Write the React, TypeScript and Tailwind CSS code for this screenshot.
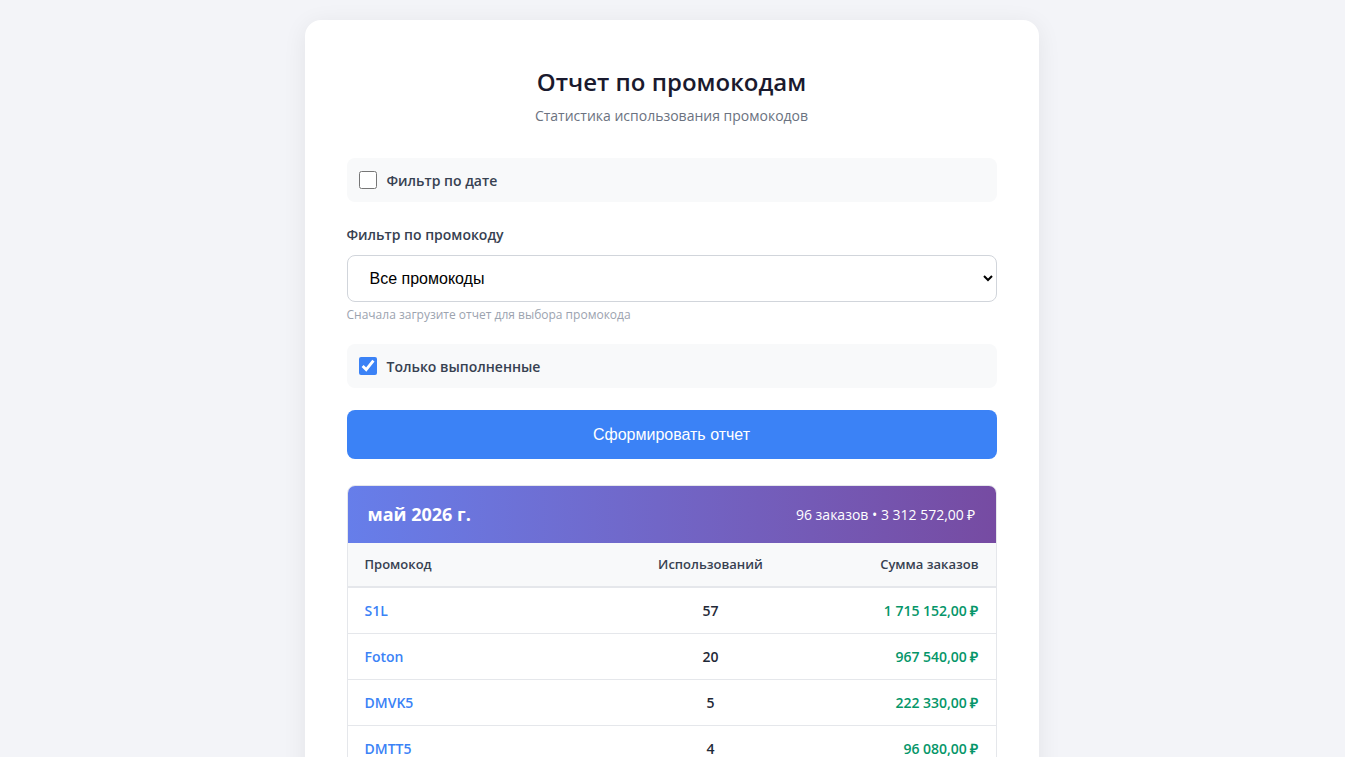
import { useState } from 'react';

const rows = [
  { code: 'S1L', count: 57, sum: '1 715 152,00 ₽' },
  { code: 'Foton', count: 20, sum: '967 540,00 ₽' },
  { code: 'DMVK5', count: 5, sum: '222 330,00 ₽' },
  { code: 'DMTT5', count: 4, sum: '96 080,00 ₽' },
  { code: 'DMSL3', count: 3, sum: '74 120,00 ₽' },
  { code: 'NEW10', count: 2, sum: '41 250,00 ₽' },
];

export default function App() {
  const [byDate, setByDate] = useState(false);
  const [onlyDone, setOnlyDone] = useState(true);

  return (
    <div className="min-h-screen bg-[#f3f4f8] pt-5 pb-10 font-['Open_Sans',sans-serif] text-[#1f2937]">
      <div className="mx-auto w-[734px] -translate-x-px rounded-2xl bg-white px-[42px] pt-[46px] pb-10 shadow-[0_4px_24px_rgba(0,0,0,0.07)]">
        <div className="text-center">
          <h1 className="text-[24px] font-semibold leading-8 text-[#1a1a2e]">Отчет по промокодам</h1>
          <p className="mt-[8px] text-[14px] leading-5 text-[#6b7280]">Статистика использования промокодов</p>
        </div>

        <label className="mt-[32px] flex h-[44px] cursor-pointer items-center gap-[10px] rounded-lg bg-[#f8f9fa] px-3">
          <input
            type="checkbox"
            checked={byDate}
            onChange={e => setByDate(e.target.checked)}
            className="h-[18px] w-[18px] accent-[#3b82f6]"
          />
          <span className="text-[14px] font-semibold text-[#374151]">Фильтр по дате</span>
        </label>

        <div className="mt-[23px]">
          <div className="text-[14px] font-semibold leading-5 text-[#374151]">Фильтр по промокоду</div>
          <select className="mt-[10px] h-[47px] w-full rounded-lg border border-[#d1d5db] bg-white px-[18px] font-['Liberation_Sans',sans-serif] text-[16px] text-black">
            <option>Все промокоды</option>
          </select>
          <div className="mt-[5px] text-[12px] leading-4 text-[#9ca3af]">Сначала загрузите отчет для выбора промокода</div>
        </div>

        <label className="mt-[21px] flex h-[44px] cursor-pointer items-center gap-[10px] rounded-lg bg-[#f8f9fa] px-3">
          <input
            type="checkbox"
            checked={onlyDone}
            onChange={e => setOnlyDone(e.target.checked)}
            className="h-[18px] w-[18px] accent-[#3b82f6]"
          />
          <span className="text-[14px] font-semibold text-[#374151]">Только выполненные</span>
        </label>

        <button className="mt-[22px] h-[49px] w-full rounded-lg bg-[#3b82f6] font-['Liberation_Sans',sans-serif] text-[16px] text-white">
          Сформировать отчет
        </button>

        <div className="mt-[26px] overflow-hidden rounded-lg border border-[#e5e7eb]">
          <div className="flex h-[57px] items-center justify-between bg-gradient-to-r from-[#667eea] to-[#764ba2] px-5 text-white">
            <span className="text-[18px] font-bold">май 2026 г.</span>
            <span className="text-[14px]">96 заказов • 3 312 572,00 ₽</span>
          </div>
          <table className="w-full table-fixed border-collapse text-[14px]">
            <colgroup>
              <col className="w-[273px]" />
              <col className="w-[180px]" />
              <col />
            </colgroup>
            <thead>
              <tr className="h-[44px] border-b-2 border-[#e5e7eb] bg-[#f8f9fa] text-[13px] text-[#374151]">
                <th className="px-[17px] text-left font-semibold">Промокод</th>
                <th className="text-center font-semibold">Использований</th>
                <th className="px-[17px] text-right font-semibold">Сумма заказов</th>
              </tr>
            </thead>
            <tbody>
              {rows.map(r => (
                <tr key={r.code} className="h-[46px] border-b border-[#e5e7eb] font-semibold">
                  <td className="px-[17px] text-left text-[#3b82f6]">{r.code}</td>
                  <td className="text-center text-[#1f2937]">{r.count}</td>
                  <td className="px-[17px] text-right text-[#059669]">{r.sum}</td>
                </tr>
              ))}
            </tbody>
          </table>
        </div>
      </div>
    </div>
  );
}
